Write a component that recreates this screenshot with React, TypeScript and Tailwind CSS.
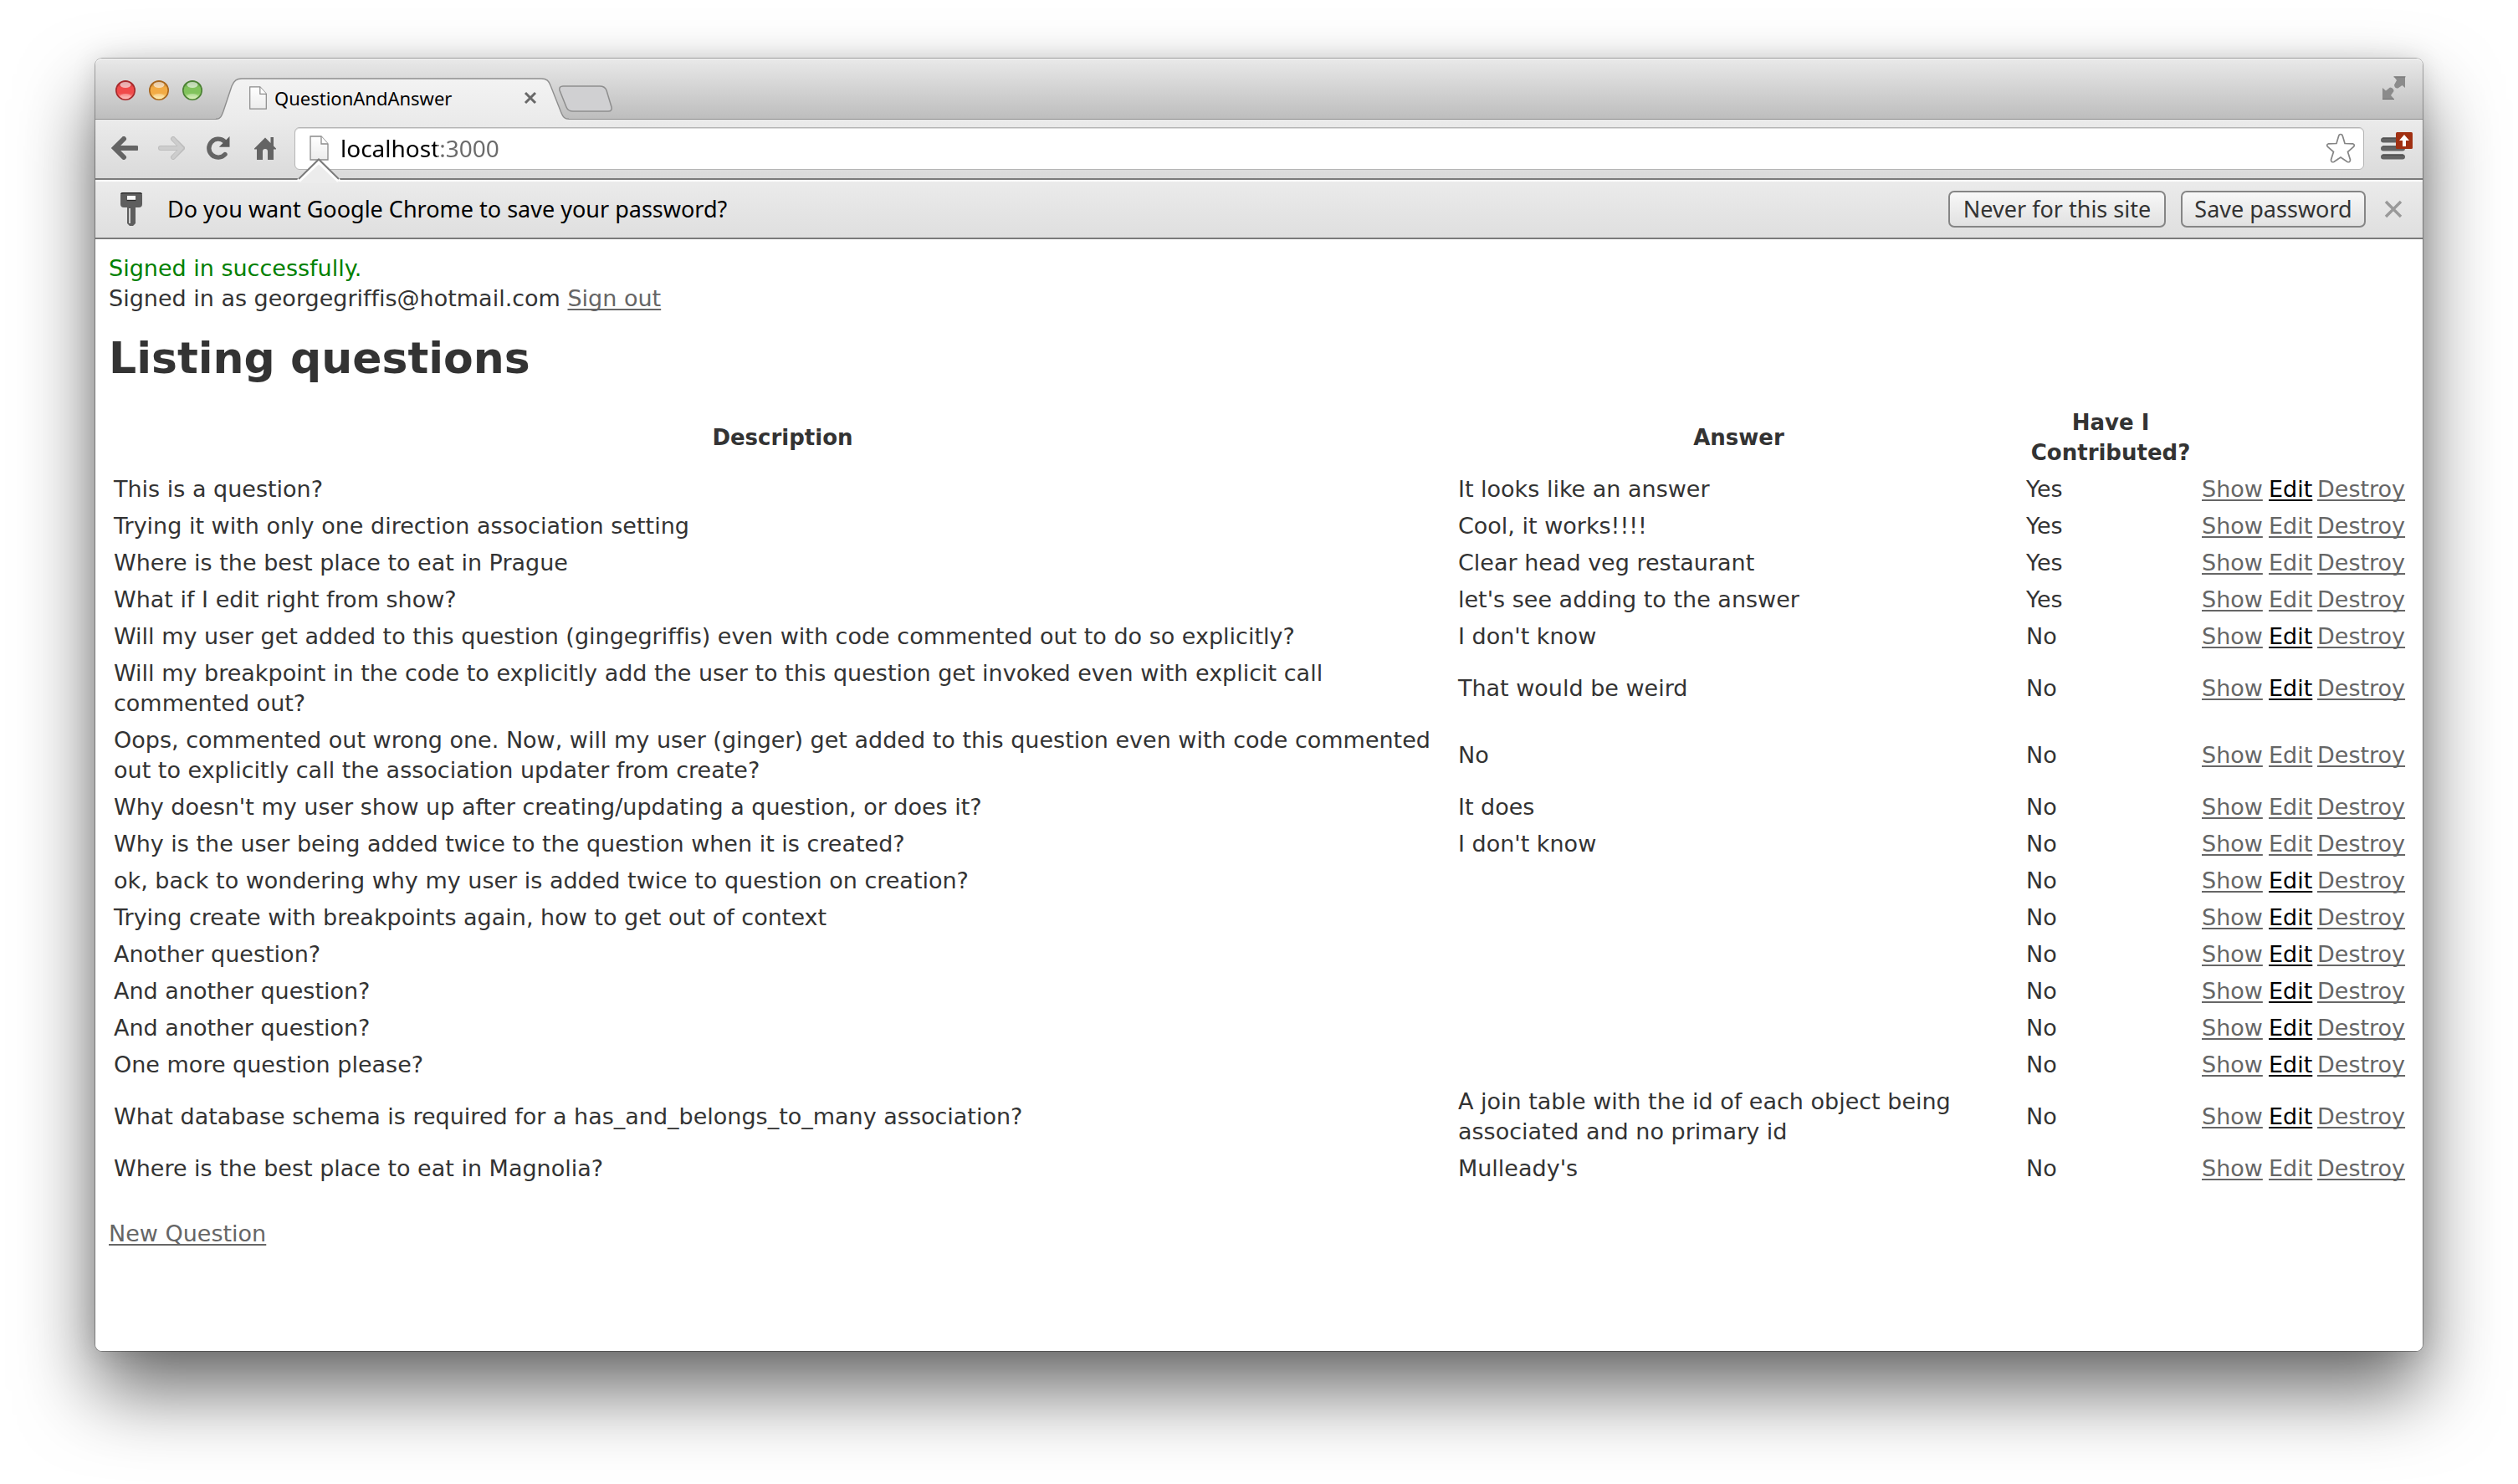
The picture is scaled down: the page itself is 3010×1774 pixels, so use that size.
import type { ReactNode } from "react";

type Row = { q: string; a: string; mine: boolean; visited: boolean };

const rows: Row[] = [
  { q: "This is a question?", a: "It looks like an answer", mine: true, visited: true },
  { q: "Trying it with only one direction association setting", a: "Cool, it works!!!!", mine: true, visited: false },
  { q: "Where is the best place to eat in Prague", a: "Clear head veg restaurant", mine: true, visited: false },
  { q: "What if I edit right from show?", a: "let's see adding to the answer", mine: true, visited: false },
  { q: "Will my user get added to this question (gingegriffis) even with code commented out to do so explicitly?", a: "I don't know", mine: false, visited: true },
  { q: "Will my breakpoint in the code to explicitly add the user to this question get invoked even with explicit call commented out?", a: "That would be weird", mine: false, visited: true },
  { q: "Oops, commented out wrong one. Now, will my user (ginger) get added to this question even with code commented out to explicitly call the association updater from create?", a: "No", mine: false, visited: false },
  { q: "Why doesn't my user show up after creating/updating a question, or does it?", a: "It does", mine: false, visited: false },
  { q: "Why is the user being added twice to the question when it is created?", a: "I don't know", mine: false, visited: false },
  { q: "ok, back to wondering why my user is added twice to question on creation?", a: "", mine: false, visited: true },
  { q: "Trying create with breakpoints again, how to get out of context", a: "", mine: false, visited: true },
  { q: "Another question?", a: "", mine: false, visited: true },
  { q: "And another question?", a: "", mine: false, visited: true },
  { q: "And another question?", a: "", mine: false, visited: true },
  { q: "One more question please?", a: "", mine: false, visited: true },
  { q: "What database schema is required for a has_and_belongs_to_many association?", a: "A join table with the id of each object being associated and no primary id", mine: false, visited: true },
  { q: "Where is the best place to eat in Magnolia?", a: "Mulleady's", mine: false, visited: false },
];

function PageLink({ visited, children }: { visited?: boolean; children: ReactNode }) {
  return (
    <a
      href="#"
      className={
        visited
          ? "text-black underline decoration-2 underline-offset-3 [text-decoration-skip-ink:none]"
          : "text-[#666666] underline decoration-2 underline-offset-3 [text-decoration-skip-ink:none]"
      }
    >
      {children}
    </a>
  );
}

function TrafficLight({ id, label, dark, mid, light }: { id: string; label: string; dark: string; mid: string; light: string }) {
  return (
    <button aria-label={label} className="size-6">
      <svg viewBox="0 0 24 24" className="size-6">
        <defs>
          <linearGradient id={id} x1="0" y1="0" x2="0" y2="1">
            <stop offset="0" stopColor={dark} />
            <stop offset="0.35" stopColor={mid} />
            <stop offset="0.65" stopColor={mid} />
            <stop offset="1" stopColor={light} />
          </linearGradient>
        </defs>
        <circle cx="12" cy="12.6" r="11.4" fill="#fff" opacity="0.5" />
        <circle cx="12" cy="12" r="11.2" fill={`url(#${id})`} stroke={dark} strokeWidth="1.6" />
        <ellipse cx="12" cy="5.5" rx="6.5" ry="3.4" fill="#fff" opacity="0.6" />
        <ellipse cx="12" cy="19" rx="6.5" ry="3" fill="#fff" opacity="0.3" />
      </svg>
    </button>
  );
}

function PageIcon({ className }: { className: string }) {
  return (
    <svg viewBox="0 0 23 30" className={className} aria-hidden="true">
      <defs>
        <linearGradient id="sheet" x1="0" y1="0" x2="0" y2="1">
          <stop offset="0" stopColor="#ffffff" />
          <stop offset="1" stopColor="#ececec" />
        </linearGradient>
      </defs>
      <path d="M1 1h13l8 9v19H1z" fill="url(#sheet)" stroke="#8a8a8a" strokeWidth="1.3" />
      <path d="M14 1v9h8" fill="#fff" stroke="#8a8a8a" strokeWidth="1.3" />
    </svg>
  );
}

function TabStrip() {
  return (
    <div className="flex h-[73px] items-end rounded-t-lg bg-linear-to-b from-[#e9e9e9] to-[#bdbdbd] pl-6 pr-5 shadow-[inset_0_1px_0_#f6f6f6,inset_0_-1px_0_#8e8e8e]">
      <div className="mb-[23px] flex gap-4">
        <TrafficLight id="lightClose" label="Close" dark="#a52a2c" mid="#f04a4a" light="#ffb5ae" />
        <TrafficLight id="lightMinimise" label="Minimise" dark="#a8661d" mid="#f2ab45" light="#fff3a0" />
        <TrafficLight id="lightZoom" label="Zoom" dark="#4b8034" mid="#81c35c" light="#d8f5a8" />
      </div>
      <div className="relative ml-4 h-[50px] w-[422px]">
        <svg viewBox="0 0 422 50" className="absolute inset-0 h-[50px] w-[422px]" aria-hidden="true">
          <defs>
            <linearGradient id="tabFill" x1="0" y1="0" x2="0" y2="1">
              <stop offset="0" stopColor="#f3f3f3" />
              <stop offset="1" stopColor="#ebebeb" />
            </linearGradient>
          </defs>
          <path
            d="M0 50V49H1C6 49 7 45 9 40L19 10C22 3 25 1 31 1H389C396 1 398 4 400 9L413 42C415 47 417 49 421 49H422V50Z"
            fill="url(#tabFill)"
          />
          <path
            d="M0 49.3H1C6 49 7 45 9 40L19 10C22 3 25 1 31 1H389C396 1 398 4 400 9L413 42C415 47 417 49 422 49.3"
            fill="none"
            stroke="#8e8e8e"
            strokeWidth="1.4"
          />
        </svg>
        <div className="relative flex h-12 items-center pl-[39px] pr-[38px]">
          <PageIcon className="h-7 w-[23px]" />
          <span className="ml-2 flex-1 text-[22px] leading-7 text-black">QuestionAndAnswer</span>
          <button aria-label="Close tab">
            <svg viewBox="0 0 16 16" className="size-4">
              <path d="M2 2L14 14M14 2L2 14" stroke="#686868" strokeWidth="3" />
            </svg>
          </button>
        </div>
      </div>
      <button aria-label="New tab" className="-ml-3 mb-[9px]">
        <svg viewBox="0 0 64 32" className="h-8 w-16">
          <path
            d="M5 1H49Q55 1 57 6L63 26Q64 31 59 31H17Q11 31 9 26L1 6Q0 1 5 1Z"
            fill="#d0d0d2"
            stroke="#8e8e8e"
            strokeWidth="1.5"
          />
        </svg>
      </button>
      <button aria-label="Full screen" className="mb-6 ml-auto">
        <svg viewBox="0 0 28 28" className="size-7">
          <path
            d="M14 1H27V14L23.5 11L18.5 14.5Q14.5 15 14 10.5L17 5Z M0 14L4 17.500L9 13.500Q13.500 14 13.500 18L10 23L14 27.500H0Z"
            fill="#8b8b8b"
          />
          <path d="M13.500 .8H27.500M0 27.500H14" stroke="#6c6c6c" strokeWidth="1" />
        </svg>
      </button>
    </div>
  );
}

function Toolbar() {
  return (
    <div className="flex h-[72px] items-center border-b-2 border-[#7a7a7a] bg-linear-to-b from-[#ebebeb] to-[#dadada] pb-0.5 pl-[19px] pr-3">
      <div className="flex gap-6">
        <button aria-label="Back">
          <svg viewBox="0 0 32 28" className="h-7 w-8">
            <path d="M30 14H5M15 3L4 14L15 25" fill="none" stroke="#646464" strokeWidth="6" strokeLinecap="round" strokeLinejoin="miter" />
          </svg>
        </button>
        <button aria-label="Forward">
          <svg viewBox="0 0 32 28" className="h-7 w-8">
            <path d="M3 14H28M18 3L29 14L18 25" fill="none" stroke="#bdbdbd" strokeWidth="6" strokeLinecap="round" />
            <path d="M3 14H28M18 3L28 14L18 25" fill="none" stroke="#cdcdcd" strokeWidth="4" strokeLinecap="round" />
          </svg>
        </button>
        <button aria-label="Reload">
          <svg viewBox="0 0 32 28" className="h-7 w-8">
            <path d="M24 21.500A11 11 0 1 1 23 5.800" fill="none" stroke="#646464" strokeWidth="5.400" strokeLinecap="round" />
            <path d="M29.500 0V12.800H16.800Z" fill="#5c5c5c" />
          </svg>
        </button>
        <button aria-label="Home">
          <svg viewBox="0 0 32 28" className="h-7 w-8">
            <path d="M16 1.500L22.500 8V1H26V11.500L29 14.500V15.500H26V28H19V18Q19 15 16 15Q13 15 13 18V28H6V15.500H3V14.500Z" fill="#646464" />
          </svg>
        </button>
      </div>
      <div className="ml-[19px] flex h-[51px] flex-1 items-center rounded-md border border-[#b5b5b5] bg-white pl-[17px] pr-[9px] shadow-[inset_0_1px_0_#dcdcdc]">
        <PageIcon className="h-[30px] w-[23px]" />
        <input
          aria-label="Address"
          defaultValue="localhost:3000"
          className="ml-[14px] min-w-0 flex-1 bg-[linear-gradient(to_right,#000_115px,#6a6a6a_115px)] bg-clip-text text-[28px] leading-9 text-transparent outline-none"
        />
        <button aria-label="Bookmark this page">
          <svg viewBox="0 0 36 36" className="size-9">
            <path
              d="M18 1.500Q20 1.500 20.500 4L23 12.500L32.500 12.800Q35.500 14 33.500 16.500L26.500 22.500L29.500 32Q29.500 35.500 26 34.500L18 29L10 34.500Q6.500 35.500 6.500 32L9.500 22.500L2.500 16.500Q.500 14 3.500 12.800L13 12.500L15.500 4Q16 1.500 18 1.500Z"
              fill="#fff"
              stroke="#858585"
              strokeWidth="1.700"
            />
          </svg>
        </button>
      </div>
      <button aria-label="Menu, update available" className="ml-5">
        <svg viewBox="0 0 38 38" className="size-[38px]">
          <path d="M3 9.500H26M3 19.500H26M3 29.500H26" stroke="#636363" strokeWidth="6" strokeLinecap="round" />
          <path d="M2.500 7H26.500M2.500 17H26.500M2.500 27H26.500" stroke="#404040" strokeWidth="1.200" strokeLinecap="round" />
          <rect x="18" y="0" width="20" height="20" rx="1.500" fill="#a03012" />
          <path d="M28 3L34 10H30V17H26V10H22Z" fill="#fff" />
        </svg>
      </button>
    </div>
  );
}

function InfoBar() {
  return (
    <div className="relative flex h-[71px] items-center border-b-2 border-[#7a7a7a] bg-linear-to-b from-[#ebebeb] to-[#dfdfdf] pl-[30px] pr-6 shadow-[inset_0_2px_0_#ffffff]">
      <svg viewBox="0 0 52 30" className="absolute -top-[26px] left-[241px] h-[30px] w-[52px]" aria-hidden="true">
        <path d="M1 30L2 28L26 3L50 28L51 30Z" fill="#ececec" />
        <path d="M2 27L26 4L50 27" fill="none" stroke="#fff" strokeWidth="5" />
        <path d="M2 25L26 1.500L50 25" fill="none" stroke="#7a7a7a" strokeWidth="2" />
      </svg>
      <svg viewBox="0 0 26 40" className="h-10 w-[26px]" aria-hidden="true">
        <path d="M3 0H23Q26 0 26 3V14Q26 18 22 18H18V37L15 40H11L8 37V18H4Q0 18 0 14V3Q0 0 3 0Z" fill="#5e5e5e" />
        <path d="M1 2Q1 .800 3 .800H23Q25 .800 25 2" fill="none" stroke="#333" strokeWidth="1.600" />
        <rect x="8" y="4" width="10" height="5.500" fill="#fafafa" />
        <path d="M7.500 9.500H18.500" stroke="#2c2c2c" strokeWidth="1.300" />
        <path d="M11 19V37" stroke="#fff" strokeWidth="1.400" />
      </svg>
      <p className="ml-[30px] flex-1 text-[27px] leading-9 text-black">Do you want Google Chrome to save your password?</p>
      <div className="flex gap-[18px]">
        <button className="h-11 w-[260px] rounded-[7px] border-2 border-[#858585] bg-linear-to-b from-[#f8f8f8] to-[#e1e1e1] text-[27px] leading-9 text-[#333333]">
          Never for this site
        </button>
        <button className="h-11 w-[221px] rounded-[7px] border-2 border-[#858585] bg-linear-to-b from-[#f8f8f8] to-[#e1e1e1] text-[27px] leading-9 text-[#333333]">
          Save password
        </button>
      </div>
      <button aria-label="Dismiss" className="ml-[22px]">
        <svg viewBox="0 0 22 22" className="size-[22px]">
          <path d="M2 2L20 20M20 2L2 20" stroke="#999999" strokeWidth="3.400" />
        </svg>
      </button>
    </div>
  );
}

function QuestionsPage() {
  return (
    <main className="rounded-b-lg bg-white px-4 pb-[122px] pt-[17px] font-['Verdana','DejaVu_Sans',sans-serif] text-[27px] leading-9 text-[#333333] [font-variant-ligatures:none]">
      <p className="text-[#008000]">Signed in successfully.</p>
      <p>
        Signed in as georgegriffis@hotmail.com <PageLink>Sign out</PageLink>
      </p>
      <h1 className="my-[35px] text-[52px] font-bold leading-9">Listing questions</h1>
      <table className="w-full table-fixed border-separate border-spacing-1">
        <colgroup>
          <col />
          <col className="w-[24.8%]" />
          <col className="w-[206px]" />
          <col className="w-[76px]" />
          <col className="w-[54px]" />
          <col className="w-[108px]" />
        </colgroup>
        <thead className="text-[26px]">
          <tr>
            <th className="p-0.5">Description</th>
            <th className="p-0.5">Answer</th>
            <th className="p-0.5">Have I Contributed?</th>
            <th />
            <th />
            <th />
          </tr>
        </thead>
        <tbody>
          {rows.map((row, i) => (
            <tr key={i}>
              <td className="p-0.5">{row.q}</td>
              <td className="p-0.5">{row.a}</td>
              <td className="p-0.5">{row.mine ? "Yes" : "No"}</td>
              <td className="whitespace-nowrap p-0.5">
                <PageLink>Show</PageLink>
              </td>
              <td className="whitespace-nowrap p-0.5">
                <PageLink visited={row.visited}>Edit</PageLink>
              </td>
              <td className="whitespace-nowrap p-0.5">
                <PageLink>Destroy</PageLink>
              </td>
            </tr>
          ))}
        </tbody>
      </table>
      <p className="mt-9">
        <PageLink>New Question</PageLink>
      </p>
    </main>
  );
}

export default function App() {
  return (
    <div className="min-h-screen overflow-hidden bg-white px-[114px] pb-[150px] pt-[70px]">
      <div className="rounded-lg font-['Lucida_Grande','Noto_Sans',sans-serif] shadow-[0_0_0_1px_rgba(0,0,0,0.3),0_0_30px_rgba(0,0,0,0.12),0_48px_90px_rgba(0,0,0,0.58)]">
        <TabStrip />
        <Toolbar />
        <InfoBar />
        <QuestionsPage />
      </div>
    </div>
  );
}
